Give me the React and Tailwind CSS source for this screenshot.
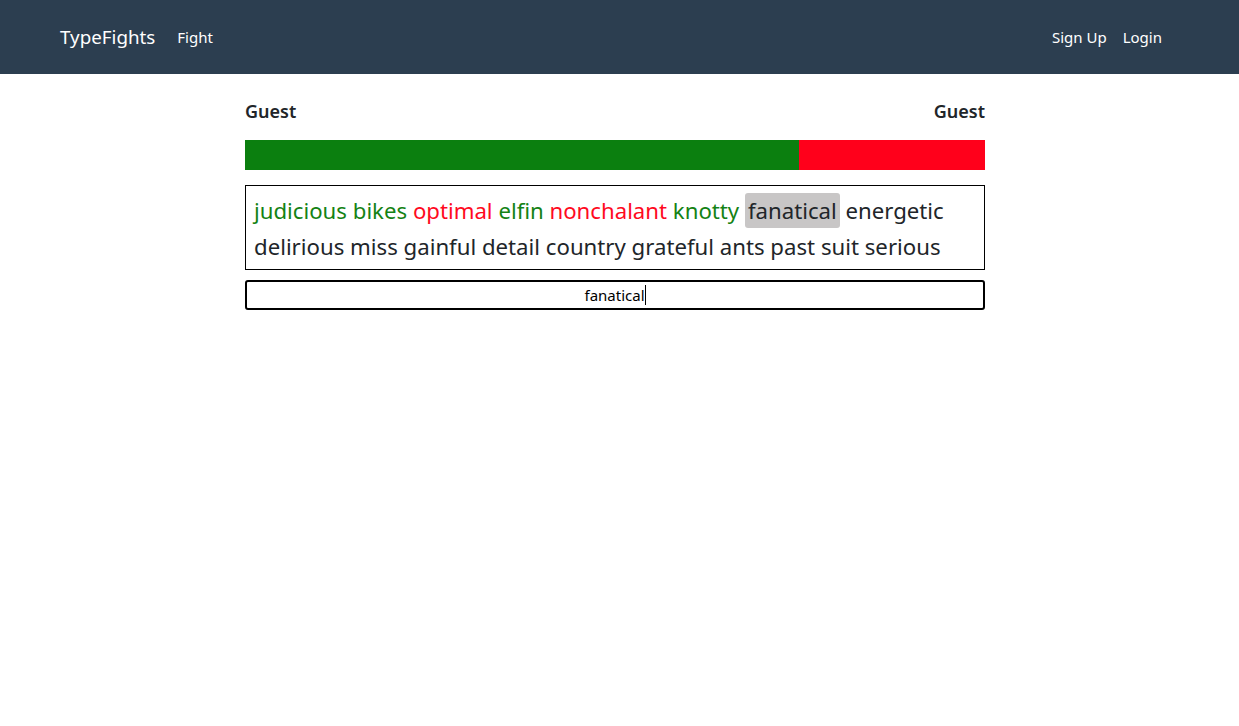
import React from "react";

const words = [
  { text: "judicious", status: "correct" },
  { text: "bikes", status: "correct" },
  { text: "optimal", status: "wrong" },
  { text: "elfin", status: "correct" },
  { text: "nonchalant", status: "wrong" },
  { text: "knotty", status: "correct" },
  { text: "fanatical", status: "current" },
  { text: "energetic" },
  { text: "delirious" },
  { text: "miss" },
  { text: "gainful" },
  { text: "detail" },
  { text: "country" },
  { text: "grateful" },
  { text: "ants" },
  { text: "past" },
  { text: "suit" },
  { text: "serious" },
];

const wordClass = {
  correct: "text-[#148214]",
  wrong: "text-[#ff0a1e]",
  current: "bg-[#c8c6c6] rounded-[3px] px-[3px] py-[2px]",
};

const Navbar = () => (
  <nav className="h-[74px] bg-[#2c3e50] flex items-center justify-between pl-[60px] pr-[77px] text-white">
    <div className="flex items-center">
      <span className="text-[18.8px] mr-[22px]">TypeFights</span>
      <span className="text-[15px]">Fight</span>
    </div>
    <div className="flex items-center gap-[16px] text-[15px]">
      <span>Sign Up</span>
      <span>Login</span>
    </div>
  </nav>
);

export default function App() {
  return (
    <div className="min-h-screen bg-white text-[#212529] font-['Noto_Sans',sans-serif]">
      <Navbar />
      <main className="w-[740px] ml-[245px] pt-[24px]">
        <div className="flex justify-between text-[18px] font-semibold leading-[26px]">
          <span>Guest</span>
          <span>Guest</span>
        </div>
        <div className="flex h-[30px] mt-[16px]">
          <div className="w-[554px] bg-[#0b7f0f]" />
          <div className="flex-1 bg-[#ff001b]" />
        </div>
        <div className="mt-[15px] border border-black px-[8px] pt-[7px] pb-[4px] text-[22.2px] leading-[36px]">
          {words.map((w, i) => (
            <React.Fragment key={i}>
              <span className={wordClass[w.status] || ""}>{w.text}</span>{" "}
            </React.Fragment>
          ))}
        </div>
        <div className="mt-[10px] h-[30px] border-2 border-black rounded-[3px] flex items-center justify-center text-[15px] text-black">
          <span>fanatical</span>
          <span className="w-px h-[20px] bg-black" />
        </div>
      </main>
    </div>
  );
}
